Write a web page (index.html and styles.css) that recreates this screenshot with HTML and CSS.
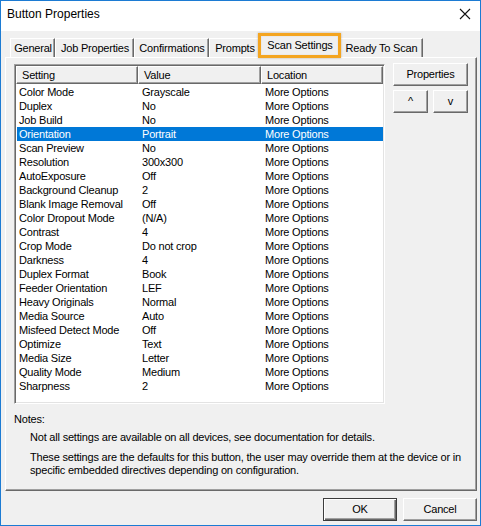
FILE: index.html
```html
<!DOCTYPE html>
<html>
<head>
<meta charset="utf-8">
<title>Button Properties</title>
<link rel="stylesheet" href="styles.css">
</head>
<body>
<div class="window">
  <div class="titlebar">
    <span class="title">Button Properties</span>
    <svg class="close" width="12" height="12" viewBox="0 0 12 12"><path d="M1 1 L11 11 M11 1 L1 11" stroke="#111" stroke-width="1.1" fill="none"/></svg>
  </div>
  <div class="content">
    <div class="tabs">
      <div class="tab t-general">General</div>
      <div class="tab t-job">Job Properties</div>
      <div class="tab t-confirm">Confirmations</div>
      <div class="tab t-prompts">Prompts</div>
      <div class="tab t-scan selected">Scan Settings</div>
      <div class="tab t-ready">Ready To Scan</div>
    </div>
    <div class="panel">
      <div class="main">
        <div class="listview">
          <div class="header">
            <div class="hcell c1">Setting</div>
            <div class="hcell c2">Value</div>
            <div class="hcell c3">Location</div>
          </div>
          <div class="rows">
            <div class="row"><span class="s">Color Mode</span><span class="v">Grayscale</span><span class="l">More Options</span></div>
            <div class="row"><span class="s">Duplex</span><span class="v">No</span><span class="l">More Options</span></div>
            <div class="row"><span class="s">Job Build</span><span class="v">No</span><span class="l">More Options</span></div>
            <div class="row sel"><span class="s">Orientation</span><span class="v">Portrait</span><span class="l">More Options</span></div>
            <div class="row"><span class="s">Scan Preview</span><span class="v">No</span><span class="l">More Options</span></div>
            <div class="row"><span class="s">Resolution</span><span class="v">300x300</span><span class="l">More Options</span></div>
            <div class="row"><span class="s">AutoExposure</span><span class="v">Off</span><span class="l">More Options</span></div>
            <div class="row"><span class="s">Background Cleanup</span><span class="v">2</span><span class="l">More Options</span></div>
            <div class="row"><span class="s">Blank Image Removal</span><span class="v">Off</span><span class="l">More Options</span></div>
            <div class="row"><span class="s">Color Dropout Mode</span><span class="v">(N/A)</span><span class="l">More Options</span></div>
            <div class="row"><span class="s">Contrast</span><span class="v">4</span><span class="l">More Options</span></div>
            <div class="row"><span class="s">Crop Mode</span><span class="v">Do not crop</span><span class="l">More Options</span></div>
            <div class="row"><span class="s">Darkness</span><span class="v">4</span><span class="l">More Options</span></div>
            <div class="row"><span class="s">Duplex Format</span><span class="v">Book</span><span class="l">More Options</span></div>
            <div class="row"><span class="s">Feeder Orientation</span><span class="v">LEF</span><span class="l">More Options</span></div>
            <div class="row"><span class="s">Heavy Originals</span><span class="v">Normal</span><span class="l">More Options</span></div>
            <div class="row"><span class="s">Media Source</span><span class="v">Auto</span><span class="l">More Options</span></div>
            <div class="row"><span class="s">Misfeed Detect Mode</span><span class="v">Off</span><span class="l">More Options</span></div>
            <div class="row"><span class="s">Optimize</span><span class="v">Text</span><span class="l">More Options</span></div>
            <div class="row"><span class="s">Media Size</span><span class="v">Letter</span><span class="l">More Options</span></div>
            <div class="row"><span class="s">Quality Mode</span><span class="v">Medium</span><span class="l">More Options</span></div>
            <div class="row"><span class="s">Sharpness</span><span class="v">2</span><span class="l">More Options</span></div>
          </div>
        </div>
        <div class="side">
          <button class="btn wide">Properties</button>
          <div class="pair">
            <button class="btn small">^</button>
            <button class="btn small">v</button>
          </div>
        </div>
      </div>
      <div class="notes">
        <div class="notes-label">Notes:</div>
        <p class="note">Not all settings are available on all devices, see documentation for details.</p>
        <p class="note">These settings are the defaults for this button, the user may override them at the device or in<br>specific embedded directives depending on configuration.</p>
      </div>
    </div>
    <div class="footer">
      <button class="btn dlg default">OK</button>
      <button class="btn dlg">Cancel</button>
    </div>
  </div>
</div>
</body>
</html>
```

FILE: styles.css
```css
* { box-sizing: border-box; }
html, body { margin: 0; padding: 0; background: #f0f0f0; }
body {
  font-family: "Liberation Sans", Arial, sans-serif;
  font-size: 11px;
  letter-spacing: -0.2px;
  color: #000;
}
.window {
  width: 481px;
  height: 526px;
  border: 1px solid #1c7bd3;
  background: #f0f0f0;
  display: flex;
  flex-direction: column;
}
.titlebar {
  height: 30px;
  background: #fff;
  display: flex;
  align-items: center;
  justify-content: space-between;
  padding: 0 8px 4px 6px;
  flex-shrink: 0;
}
.title { font-size: 12px; letter-spacing: 0; }
.close { margin-right: 1px; }
.content {
  flex: 1;
  display: flex;
  flex-direction: column;
  padding: 4px 3px 0 4px;
}
.tabs {
  display: flex;
  align-items: flex-end;
  height: 22px;
  padding-left: 5px;
  position: relative;
  z-index: 2;
}
.tab {
  height: 19px;
  padding: 3px 0 0 1px;
  text-align: center;
  border-top: 1px solid #fff;
  border-left: 1px solid #fff;
  border-right: 1px solid #696969;
  box-shadow: inset -1px 0 #a0a0a0;
  background: #f0f0f0;
  white-space: nowrap;
  line-height: 13px;
  flex-shrink: 0;
}
.t-general { width: 45px; }
.t-job { width: 79px; }
.t-confirm { width: 75px; }
.t-prompts { width: 51px; }
.t-scan { width: 83px; }
.t-ready { width: 84px; }
.tab.selected {
  height: 23px;
  margin: 0 -2px -1px -2px;
  padding-top: 3px;
  position: relative;
  z-index: 3;
}
.tab.selected::after {
  content: "";
  position: absolute;
  left: -1px;
  right: -1px;
  top: -3px;
  bottom: 0px;
  border: 3px solid #f4a520;
  box-shadow: 0 0 2px rgba(90, 60, 0, 0.35), inset 0 0 1px rgba(90, 60, 0, 0.3);
}
.panel {
  height: 434px;
  border-top: 1px solid #fff;
  border-left: 1px solid #fff;
  border-right: 1px solid #696969;
  border-bottom: 1px solid #696969;
  box-shadow: inset -1px -1px #a0a0a0;
  padding: 6px 0 0 8px;
  display: flex;
  flex-direction: column;
}
.main {
  display: flex;
  gap: 8px;
}
.listview {
  width: 371px;
  height: 340px;
  background: #fff;
  border-top: 1px solid #a0a0a0;
  border-left: 1px solid #a0a0a0;
  border-right: 1px solid #fff;
  border-bottom: 1px solid #fff;
  box-shadow: inset 1px 1px #696969, inset -1px -1px #e3e3e3;
  padding: 1px;
}
.header {
  display: flex;
  height: 18px;
}
.hcell {
  height: 18px;
  background: #f0f0f0;
  border-top: 1px solid #fff;
  border-left: 1px solid #fff;
  border-right: 1px solid #696969;
  border-bottom: 1px solid #696969;
  box-shadow: inset -1px -1px #a0a0a0;
  padding: 2px 0 0 5px;
  line-height: 13px;
}
.hcell.c1 { width: 122px; }
.hcell.c2 { width: 123px; }
.hcell.c3 { width: 122px; }
.rows { padding: 1px 0 0 1px; }
.row {
  display: flex;
  height: 14px;
  line-height: 14px;
  white-space: nowrap;
}
.row .s { width: 120px; padding-left: 2px; }
.row .v { width: 123px; padding-left: 5px; }
.row .l { flex: 1; padding-left: 5px; }
.row.sel { background: #0078d7; color: #fff; }
.side {
  display: flex;
  flex-direction: column;
  gap: 4px;
  margin-top: -1px;
}
.pair { display: flex; gap: 5px; }
.btn {
  font-family: "Liberation Sans", Arial, sans-serif;
  font-size: 11px;
  letter-spacing: -0.2px;
  color: #000;
  background: #f0f0f0;
  border-top: 1px solid #fff;
  border-left: 1px solid #fff;
  border-right: 1px solid #696969;
  border-bottom: 1px solid #696969;
  box-shadow: inset -1px -1px #a0a0a0;
  height: 23px;
  padding: 0;
  margin: 0;
  line-height: 13px;
}
.btn.wide { width: 75px; }
.btn.small { width: 35px; }
.notes {
  padding-top: 9px;
  line-height: 13px;
}
.notes-label { margin: 0 0 5px 0; }
.note {
  margin: 0 0 7px 16px;
  white-space: nowrap;
}
.footer {
  display: flex;
  justify-content: flex-end;
  gap: 6px;
  padding: 7px 0 0 0;
}
.btn.dlg { width: 74px; }
.btn.default {
  border: 1px solid #3c3c3c;
  box-shadow: inset 1px 1px #fff, inset -1px -1px #696969, inset -2px -2px #a0a0a0;
}
```
